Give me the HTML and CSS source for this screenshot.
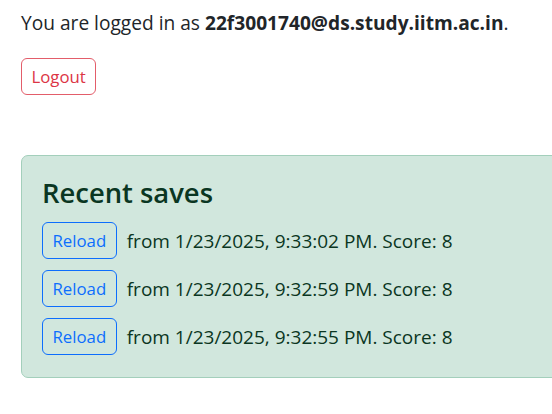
FILE: index.html
```html
<!DOCTYPE html>
<html lang="en">
<head>
<meta charset="utf-8">
<title>Recent saves</title>
<link rel="stylesheet" href="styles.css">
</head>
<body>
<main class="page">
  <p class="login">You are logged in as <strong>22f3001740@ds.study.iitm.ac.in</strong>.</p>
  <div class="actions">
    <button class="btn btn-danger" type="button">Logout</button>
  </div>
  <section class="card">
    <h2 class="card-title">Recent saves</h2>
    <ul class="saves">
      <li class="save"><button class="btn btn-primary" type="button">Reload</button><span class="save-text">from 1/23/2025, 9:33:02 PM. Score: 8</span></li>
      <li class="save"><button class="btn btn-primary" type="button">Reload</button><span class="save-text">from 1/23/2025, 9:32:59 PM. Score: 8</span></li>
      <li class="save"><button class="btn btn-primary" type="button">Reload</button><span class="save-text">from 1/23/2025, 9:32:55 PM. Score: 8</span></li>
    </ul>
  </section>
</main>
</body>
</html>
```

FILE: styles.css
```css
html, body {
  margin: 0;
  padding: 0;
  overflow: hidden;
  background: #ffffff;
}

body {
  font-family: "Open Sans", "Noto Sans", sans-serif;
  color: #212529;
}

.page {
  display: flex;
  flex-direction: column;
  align-items: flex-start;
  padding: 8px 0 0 21px;
  width: 640px;
}

.login {
  margin: 0;
  font-size: 19.15px;
  line-height: 30px;
}

.login strong {
  font-weight: 700;
}

.actions {
  margin-top: 20px;
}

.btn {
  font-family: inherit;
  font-size: 16.8px;
  line-height: 24px;
  height: 37px;
  padding: 0 9.5px;
  border-radius: 6px;
  background: transparent;
  cursor: pointer;
}

.btn-danger {
  color: #dc3545;
  border: 1px solid #e35d6a;
}

.btn-primary {
  color: #0d6efd;
  border: 1px solid #0d6efd;
}

.card {
  margin-top: 60px;
  align-self: stretch;
  background: #d1e7dd;
  border: 1px solid #a3cfbb;
  border-radius: 7px;
  padding: 20px 20px 22px;
  color: #0a3622;
}

.card-title {
  margin: 0 0 12px;
  font-size: 27.4px;
  line-height: 34px;
  font-weight: 600;
}

.saves {
  list-style: none;
  margin: 0;
  padding: 0;
  display: flex;
  flex-direction: column;
  gap: 11px;
}

.save {
  display: flex;
  align-items: center;
  gap: 10px;
}

.save-text {
  font-size: 19px;
}
```
